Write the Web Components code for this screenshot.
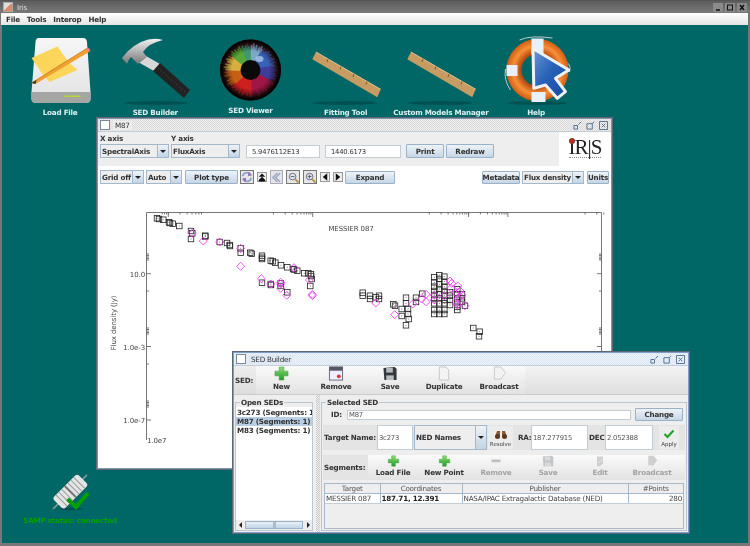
<!DOCTYPE html>
<html>
<head>
<meta charset="utf-8">
<title>Iris</title>
<style>
  html, body { margin: 0; padding: 0; width: 750px; height: 546px; overflow: hidden; background: #006666; }
  body { font: bold 7.2px "DejaVu Sans", sans-serif; letter-spacing: -.22px; color: #333; }
</style>
</head>
<body>
<iris-desktop></iris-desktop>

<script>
const floppy = (c, d) => `<svg viewBox="0 0 16 16" width="16" height="16"><path d="M1 2 L13 1 L15 3 L15 15 L2 15 Z" fill="${c}"/><rect x="4" y="2" width="7" height="5" fill="${d}"/><rect x="4" y="10" width="8" height="5" fill="#ddd" opacity=".8"/></svg>`
const plus = `<svg viewBox="0 0 16 16" width="15" height="15"><defs><linearGradient id="pg" x1="0" y1="0" x2="0" y2="1"><stop offset="0" stop-color="#8be070"/><stop offset="1" stop-color="#1f9a2c"/></linearGradient></defs><path d="M5.5 1 H10.5 V5.5 H15 V10.5 H10.5 V15 H5.5 V10.5 H1 V5.5 H5.5 Z" fill="url(#pg)" stroke="#3a9a3a" stroke-width=".5"/></svg>`
const page = (c) => `<svg viewBox="0 0 16 16" width="16" height="16"><path d="M3 1 H10 L13 4 V15 H3 Z" fill="${c}" stroke="#c4c4c4" stroke-width="1"/></svg>`

const ICONS = {
  plus,
  floppy: floppy("#33383c", "#b8bcc0"),
  floppyOff: floppy("#c2c4c6", "#dcdcdc"),
  card: `<svg viewBox="0 0 16 16" width="16" height="16"><rect x="1" y="1" width="14" height="14" fill="#eef" stroke="#667" stroke-width="1"/><rect x="1" y="1" width="14" height="4" fill="#556"/><circle cx="11" cy="11" r="2" fill="#d33"/></svg>`,
  page: page("#f4f4f4"),
  send: `<svg viewBox="0 0 16 16" width="16" height="16"><path d="M3 1 H10 L15 7 L10 14 H3 Z" fill="#f2f2f2" stroke="#c8c8c8"/></svg>`,
  sendOff: `<svg viewBox="0 0 16 16" width="16" height="16"><path d="M3 1 H10 L15 7 L10 14 H3 Z" fill="#cfcfcf"/></svg>`,
  minusOff: `<svg viewBox="0 0 16 16" width="16" height="16"><rect x="2" y="6" width="12" height="3.5" rx="1" fill="#c0c0c0"/></svg>`,
  editOff: `<svg viewBox="0 0 16 16" width="16" height="16"><path d="M4 2 H12 V11 L8 15 H4 Z" fill="#d0d0d0"/><path d="M6 11 L11 5" stroke="#eee"/></svg>`,
  binoculars: `<svg viewBox="0 0 14 10" width="14" height="10"><path d="M1 8 L3 2 H6 V8 Z M8 2 H11 L13 8 H8 Z" fill="#8a5a30"/><circle cx="3.5" cy="7.5" r="2.5" fill="#5a3a20"/><circle cx="10.5" cy="7.5" r="2.5" fill="#5a3a20"/></svg>`,
  check: `<svg viewBox="0 0 12 10" width="12" height="10"><path d="M1.5 5 L4.5 8 L10.5 1.5" fill="none" stroke="#22a022" stroke-width="2"/></svg>`,
}

const NAV = {
  cycle: `<svg viewBox="0 0 14 14" width="12" height="12"><path d="M2 6 A5 5 0 0 1 11 4 M12 8 A5 5 0 0 1 3 10" fill="none" stroke="#8aa0c8" stroke-width="2"/><path d="M9 1 L13 5 L8 6 Z M5 13 L1 9 L6 8 Z" fill="#8a70b8"/></svg>`,
  top: `<svg viewBox="0 0 10 10" width="9" height="9"><path d="M5 0 L9 4 H1 Z M5 4 L9 8 H1 Z" fill="#111"/><rect x="1" y="8" width="8" height="2" fill="#111"/></svg>`,
  back: `<svg viewBox="0 0 12 12" width="11" height="11"><path d="M7 1 L2 6 L7 11 M10 1 L5 6 L10 11" fill="none" stroke="#9aa8c8" stroke-width="1.6"/></svg>`,
  zoomOut: `<svg viewBox="0 0 12 12" width="11" height="11"><circle cx="5" cy="5" r="3.6" fill="#dde6f2" stroke="#667"/><path d="M3 5 H7" stroke="#555"/><path d="M8 8 L11.5 11.5" stroke="#b89030" stroke-width="2"/></svg>`,
  zoomIn: `<svg viewBox="0 0 12 12" width="11" height="11"><circle cx="5" cy="5" r="3.6" fill="#dde6f2" stroke="#667"/><path d="M3 5 H7 M5 3 V7" stroke="#555"/><path d="M8 8 L11.5 11.5" stroke="#b89030" stroke-width="2"/></svg>`,
  left: `<svg viewBox="0 0 8 10" width="6" height="8"><path d="M7 0 V10 L1 5 Z" fill="#111"/></svg>`,
  right: `<svg viewBox="0 0 8 10" width="6" height="8"><path d="M1 0 V10 L7 5 Z" fill="#111"/></svg>`,
}

// hue by clock angle for the iris rays
const irisColor = (deg) => {
  const stops = [[0,"#7fa8c8"],[30,"#3a62b8"],[80,"#3f3f9a"],[120,"#a01848"],[180,"#d02020"],[230,"#c86018"],[270,"#d8b040"],[305,"#58a838"],[340,"#3f9a70"],[360,"#7fa8c8"]]
  for (let i = stops.length - 1; i >= 0; i--) if (deg >= stops[i][0]) return stops[i][1]
}
const irisRays = () => {
  let s = ""
  for (let i = 0; i < 150; i++) {
    const a = i * 2.4
    const r = a * Math.PI / 180 - Math.PI / 2
    const len = 20 + ((i * 37) % 8)
    const x1 = 251 + 8 * Math.cos(r), y1 = 70 + 8 * Math.sin(r)
    const x2 = 251 + len * Math.cos(r), y2 = 70 + len * Math.sin(r)
    const dark = i % 7 == 0 ? ' opacity=".5"' : ""
    s += `<line x1="${x1.toFixed(1)}" y1="${y1.toFixed(1)}" x2="${x2.toFixed(1)}" y2="${y2.toFixed(1)}" stroke="${irisColor(a)}" stroke-width="1.8"${dark}/>`
  }
  return s
}

const DESK = {
  load: `<svg viewBox="12.5 30 95 76" width="95" height="76">
    <defs><linearGradient id="dr" x1="0" y1="0" x2="0" y2="1"><stop offset="0" stop-color="#f6f6f6"/><stop offset="1" stop-color="#e2e2e2"/></linearGradient></defs>
    <path d="M38 38 H83 Q86 38 86.500 42 L90 92 V99 Q90 103 85 103 H36 Q31 103 31 99 V92 L35 42 Q35.500 38 38 38 Z" fill="url(#dr)"/>
    <path d="M31 92 H90 V99 Q90 103 85 103 H36 Q31 103 31 99 Z" fill="#a4a6a4"/>
    <rect x="64" y="95.500" width="16" height="1.500" fill="#b8d830"/>
    <path d="M31 58 L57 46.500 L68 62 L77 70 L49 82 L42 74 Z" fill="#fbd65a"/>
    <path d="M31 83 L87 48 L90 51 L35 84 Z" fill="#f0a030"/>
    <path d="M31 83 L87 48" stroke="#c87818" stroke-width=".8"/>
    <path d="M85 49 L87.500 47.500 L90 50 L88 52 Z" fill="#e88080"/>
    <path d="M31 83 L36 80 L35 84 Z" fill="#333"/>
  </svg>`,
  hammer: `<svg viewBox="108 30 95 76" width="95" height="76">
    <defs><linearGradient id="hm" x1="0" y1="0" x2="0" y2="1"><stop offset="0" stop-color="#f0f0f0"/><stop offset="1" stop-color="#777"/></linearGradient></defs>
    <ellipse cx="156" cy="103" rx="32" ry="2" fill="#004a4a" opacity=".7"/>
    <path d="M146 56 L160 64 L154 71 L138 62 Z" fill="#d8d8d8"/>
    <path d="M122 58 L128 51 Q146 35 163 40 Q149 43 143 52 L147 57 L138 64 L131 57 Q128 60 127 64 Z" fill="url(#hm)"/>
    <path d="M160 63 L190 90 L184 98 L153 71 Z" fill="#222"/>
    <path d="M158 68 L185 92" stroke="#555" stroke-width="1" stroke-dasharray="1 2.500"/>
  </svg>`,
  eye: `<svg viewBox="203.500 30 95 76" width="95" height="76">
    <defs><radialGradient id="rim" gradientUnits="userSpaceOnUse" cx="251" cy="70" r="31"><stop offset=".6" stop-color="#000" stop-opacity="0"/><stop offset=".82" stop-color="#000" stop-opacity=".4"/><stop offset=".95" stop-color="#000"/></radialGradient></defs>
    <circle cx="251" cy="70" r="30.500" fill="#4a1a20"/>
    ${irisRays()}
    <circle cx="251" cy="70" r="30.500" fill="url(#rim)"/>
    <circle cx="251" cy="70" r="10" fill="#0a0a0a"/>
    <ellipse cx="260" cy="59" rx="4" ry="3" fill="#bcd8f0" opacity=".7"/>
  </svg>`,
  ruler: `<svg viewBox="0 0 95 76" width="95" height="76">
    <ellipse cx="47" cy="73" rx="32" ry="2" fill="#004a4a" opacity=".7"/>
    <path d="M18 22 L82.700 59.300 L79.300 67.300 L14.300 29.300 Z" fill="#c69c62"/>
    <path d="M18 22 L82.700 59.300" stroke="#e0c08c" stroke-width="1"/>
    <path d="M30 29 L29 32 M43 36.500 L42 39.500 M56 44 L55 47 M69 51.500 L68 54.500" stroke="#6a4a20" stroke-width=".8"/>
  </svg>`,
  buoy: `<svg viewBox="488.500 30 95 76" width="95" height="76">
    <defs><radialGradient id="or" gradientUnits="userSpaceOnUse" cx="537" cy="70" r="31"><stop offset=".55" stop-color="#b84c10"/><stop offset=".78" stop-color="#f89038"/><stop offset="1" stop-color="#d05c14"/></radialGradient>
    <linearGradient id="ar" x1="0" y1="0" x2="1" y2="1"><stop offset="0" stop-color="#6d9ad8"/><stop offset=".45" stop-color="#2a62b8"/><stop offset="1" stop-color="#1048a0"/></linearGradient></defs>
    <ellipse cx="537" cy="103" rx="30" ry="2" fill="#004a4a" opacity=".7"/>
    <path d="M519 40 Q530 35 552 38 M505 69 Q503 80 510 90 M560 60 Q572 62 569 72" fill="none" stroke="#c0c8c8" stroke-width="1"/>
    <circle cx="537" cy="70" r="23.500" fill="none" stroke="url(#or)" stroke-width="15"/>
    <path d="M531 38.500 H543 V54 H531 Z M506 65 H517 V76 H506 Z M531 92 H545 V102 H531 Z" fill="#e8f0fa"/>
    <path d="M532.500 48.500 L568.300 70 L555 78.300 L565 91.700 L556.700 98.300 L545 85 L533.300 88.300 Z" fill="url(#ar)" stroke="#eef2f4" stroke-width="3" stroke-linejoin="round"/>
  </svg>`,
  plug: `<svg viewBox="0 0 50 42" width="50" height="42">
    <ellipse cx="25" cy="37" rx="13" ry="1.500" fill="#004a4a" opacity=".7"/>
    <g transform="rotate(45 25 20)">
      <path d="M25 -4 V5 M25 35 V44" stroke="#8a9a9a" stroke-width="1.600"/>
      <rect x="17" y="2" width="16" height="35" rx="3" fill="#e4e4e4"/>
      <path d="M17 7 H33 M17 11 H33 M17 15 H33 M17 24 H33 M17 28 H33 M17 32 H33" stroke="#9a9a9a" stroke-width="1"/>
      <rect x="17" y="18.500" width="16" height="2" fill="#777"/>
    </g>
    <path d="M22.500 27 L31 35 L43 21" fill="none" stroke="#00a000" stroke-width="4"/>
  </svg>`,
}

class JBtn extends HTMLElement {
  constructor() {
    super()
    this.attachShadow({ mode: "open" })
    this.shadowRoot.innerHTML = `
      <style>
        :host { display: inline-flex; align-items: center; justify-content: center; box-sizing: border-box; height: 13px; flex: none;
          background: linear-gradient(#eef3f8, #c6d6e6); border: 1px solid #9ab2c8; border-radius: 1px; color: #333; white-space: nowrap; }
      </style>
      <slot></slot>`
  }
}
customElements.define("j-btn", JBtn)

class JCombo extends HTMLElement {
  constructor() {
    super()
    this.attachShadow({ mode: "open" })
  }
  connectedCallback() {
    this.shadowRoot.innerHTML = `
      <style>
        :host { display: flex; box-sizing: border-box; height: 14px; flex: none; border: 1px solid #a4b8cc; background: #eeeeee; color: #333; }
        span { flex: 1; padding-left: 1px; align-self: center; white-space: nowrap; overflow: hidden; }
        b { width: 10px; flex: none; display: flex; align-items: center; justify-content: center; background: linear-gradient(#eef3f8, #c2d4e6); border-left: 1px solid #a4b8cc; }
        i { border: 3px solid transparent; border-top: 3px solid #222; border-bottom: 0; }
      </style>
      <span>${this.getAttribute("text")}</span><b><i></i></b>`
  }
}
customElements.define("j-combo", JCombo)

class JField extends HTMLElement {
  constructor() {
    super()
    this.attachShadow({ mode: "open" })
    this.shadowRoot.innerHTML = `
      <style>
        :host { display: flex; align-items: center; box-sizing: border-box; flex: none; background: #fff; padding-left: 1px;
          border: 1px solid #c4ccd4; font-weight: normal; font-size: 6.800px; letter-spacing: -.2px; color: #555; white-space: nowrap; overflow: hidden; }
      </style>
      <slot></slot>`
  }
}
customElements.define("j-field", JField)

class ToolBtn extends HTMLElement {
  constructor() {
    super()
    this.attachShadow({ mode: "open" })
  }
  connectedCallback() {
    const off = this.hasAttribute("off")
    this.shadowRoot.innerHTML = `
      <style>
        :host { display: flex; flex-direction: column; align-items: center; justify-content: flex-end; flex: none; box-sizing: border-box; padding-bottom: 3px; gap: 2px;
          color: ${off ? "#a4a4a4" : "#333"}; white-space: nowrap; }
        svg { display: block; }
        span { line-height: 8px; }
      </style>
      ${ICONS[this.getAttribute("icon")]}<span>${this.getAttribute("label")}</span>`
  }
}
customElements.define("tool-btn", ToolBtn)

class DeskIcon extends HTMLElement {
  constructor() {
    super()
    this.attachShadow({ mode: "open" })
  }
  connectedCallback() {
    this.shadowRoot.innerHTML = `
      <style>
        :host { display: flex; flex-direction: column; align-items: center; flex: none; width: 95.200px; color: #dff0f0; white-space: nowrap; }
        svg { display: block; }
        span { margin-top: var(--label-gap, 2px); height: 10px; line-height: 10px; }
      </style>
      ${DESK[this.getAttribute("icon")]}<span>${this.getAttribute("label")}</span>`
  }
}
customElements.define("desk-icon", DeskIcon)

class IntFrame extends HTMLElement {
  constructor() {
    super()
    this.attachShadow({ mode: "open" })
  }
  connectedCallback() {
    const on = this.hasAttribute("active")
    const c = on ? "#7f9ccc" : "#8494a8"
    const dot = on ? "#dbe6f4" : "#d8d8d8"
    const glyph = (d) => `<svg viewBox="0 0 10 10" width="9" height="9"><path d="${d}" fill="none" stroke="#4a6a8a" stroke-width="1"/></svg>`
    this.shadowRoot.innerHTML = `
      <style>
        :host { position: absolute; display: flex; flex-direction: column; box-sizing: border-box; background: #eeeeee; border: 2px solid ${c}; outline: 1px solid #5c6878; outline-offset: -1px; }
        .title { display: flex; align-items: center; gap: 3px; height: 13px; flex: none; box-sizing: border-box; padding: 0 3px 0 2px;
          font-weight: normal; color: #333; border-bottom: 1px solid #c4ccd4;
          background-color: ${on ? "#c8d8ec" : "#eeeeee"}; background-image: repeating-conic-gradient(${dot} 0 25%, ${on ? "#eef3fa" : "#f0f0f0"} 0 50%); background-size: 2px 2px; }
        .title span { background: ${on ? "#e0e8f4" : "#ececec"}; padding: 0 2px; }
        .box { width: 8px; height: 8px; background: #fff; border: 1px solid #7a8a9c; flex: none; }
        .ctl { margin-left: auto; display: flex; gap: 4px; }
        svg { display: block; }
      </style>
      <div class="title">
        <div class="box"></div><span>${this.getAttribute("title-text")}</span>
        <div class="ctl">
          ${glyph("M1 5 H5 V9 H1 Z M6 4 L9 1")}${glyph("M1 3 H7 V9 H1 Z M7 3 L9 1")}${glyph("M0.500 0.500 H9.500 V9.500 H0.500 Z M3 3 L7 7 M7 3 L3 7")}
        </div>
      </div>
      <slot></slot>`
  }
}
customElements.define("int-frame", IntFrame)

class PlotChart extends HTMLElement {
  constructor() {
    super()
    this.attachShadow({ mode: "open" })
  }
  _ticks() {
    let d = ""
    // top axis, decades are 39.3px wide but the plot only drew some of them
    const decade = (x0, from, to) => {
      for (let m = from; m <= to; m++) {
        const x = x0 + 39.3 * Math.log10(m)
        d += `M${x.toFixed(1)} 212.500 V${m == 10 ? 217 : 214.500}`
      }
    }
    decade(129, 7, 10); decade(168.300, 1, 7); decade(273.400, 1, 10); decade(429.300, 1, 10); decade(468.600, 1, 10); decade(585, 1, 3)
    // y axis clusters, left and right
    const ys = [254, 255.500, 257, 258.500, 260, 273.700, 291, 328, 329.500, 331, 332.500, 334, 346.500, 364, 401, 402.500, 404, 405.500, 407, 420]
    for (const y of ys) {
      const big = y == 273.700 || y == 346.500 || y == 420
      d += `M146.500 ${y} H${big ? 151 : 149}M601.500 ${y} H${big ? 597 : 599}`
    }
    return d
  }
  connectedCallback() {
    // picked off the reference plot, in page pixels
    const black = [[157,218.300],[159,219],[163.300,219.700],[169,222.300],[170,223],[172.700,223.700],[179.300,226],[191,231],[191,239],[192.300,233.300],[205.300,235.700],[205.300,236.500],[219.700,242],[227,243],[229.700,245],[230,246],[240.700,248.300],[240.700,252.700],[250.300,252.700],[251.700,253.700],[262,255.700],[262,257.700],[262,259],[270.700,260.700],[272.700,261.300],[275.300,262.700],[281,265.300],[287.300,267.300],[293.300,269],[294,269.500],[297.300,270.700],[304.300,273.300],[308.300,273.300],[311,274.300],[311,276],[311.700,279],[310.300,286],[262,282.700],[270.700,284],[271,285],[280.700,286],[280.700,283.300],[287.300,292.300],
      [362.700,292.700],[362.700,295.700],[370,295.700],[370,299],[375.700,297.300],[379,295.700],[379,299],[393.300,304.300],[395,305.700],[401.700,309],[401.700,316],[406,297.700],[406,303.300],[408,309],[408,314],[408.700,319],[406,325.300],[416,297.700],[416,302],[422.300,293.700],[473.300,328],[479.700,331.700],[479,336.300],[465,305.700]]
    const cols = [[253,[217,232,245,258,270,282,295,315,327]],[268,[211,222,238,252,268,280,295,315,327]],[283,[215,230,245,258,272,285,295,315,327]],[300,[262,272,285,300]],[322,[253,268,280,292,305,315]],[336,[268,280,290]]]
    for (const [x, list] of cols) for (const y of list) black.push([350 + x / 3, 205 + y / 3])
    const pink = [[192.300,233.300],[203.300,241],[219.700,242],[240.700,248.300],[240.700,266.300],[261.300,278.700],[270.700,284],[280.700,282.300],[280.700,284],[280.700,288.300],[286.700,295.300],[294,267.700],[309.300,280],[312.300,294.300],[312.300,295.700],
      [375.700,303],[394.700,314.700],[412.700,304],[421.700,299],[426,294.300],[426,301.700],[434.300,295],[434.300,300],[444.300,295.700],[450,281],[451.700,283.300],[451,288.300],[457.700,286],[460,291],[456,293.300],[458.300,298.300],[456,302.300],[457.300,305],[465,305.700],[461.700,295]]
    const squares = black.map(([x, y]) => `<rect x="${x - 2.750}" y="${y - 2.750}" width="5.500" height="5.500"/><rect class="dot" x="${x - .5}" y="${y - .5}" width="1" height="1"/>`).join("")
    const diamonds = pink.map(([x, y]) => `<path d="M${x} ${y - 4} L${x + 4} ${y} L${x} ${y + 4} L${x - 4} ${y} Z"/>`).join("")
    this.shadowRoot.innerHTML = `
      <style>
        :host { display: block; flex: none; }
        svg { display: block; font: normal 7px "DejaVu Sans", sans-serif; letter-spacing: -.1px; }
        text { fill: #444; }
        .sq rect { fill: none; stroke: #222; stroke-width: .8; }
        .sq .dot { fill: #777; stroke: none; }
        .di path { fill: none; stroke: #f040f0; stroke-width: .9; }
      </style>
      <svg viewBox="98 184 513 284" width="513" height="284">
        <rect x="98" y="184" width="513" height="284" fill="#fff"/>
        <path d="M146.500 440 V212.500 H601.500 V440" fill="none" stroke="#777" stroke-width="1"/>
        <path d="${this._ticks()}" fill="none" stroke="#555" stroke-width=".8"/>
        <g class="sq">${squares}</g>
        <g class="di">${diamonds}</g>
        <text x="351" y="230.500" text-anchor="middle">MESSIER 087</text>
        <text x="145" y="276.500" text-anchor="end">10.0</text>
        <text x="145" y="349.500" text-anchor="end">1.0e-3</text>
        <text x="145" y="422.500" text-anchor="end">1.0e-7</text>
        <text x="147" y="443">1.0e7</text>
        <text transform="translate(116 323) rotate(-90)" text-anchor="middle">Flux density (Jy)</text>
      </svg>`
  }
}
customElements.define("plot-chart", PlotChart)

class IrisLogo extends HTMLElement {
  constructor() {
    super()
    this.attachShadow({ mode: "open" })
    this.shadowRoot.innerHTML = `
      <style>
        :host { display: flex; flex-direction: column; align-items: center; justify-content: center; width: 52px; flex: none; background: #fff; }
        div { font: normal 21px/17px "Liberation Serif", serif; color: #222; letter-spacing: -1px; position: relative; }
        i { position: absolute; left: 0; top: -1px; width: 6px; height: 6px; border-radius: 50%; background: radial-gradient(#c22 30%, #2a5a3a); }
        u { display: block; width: 32px; height: 1px; margin-top: 1px; border-top: 1px dotted #888; }
      </style>
      <div><i></i>IR|S</div><u></u>`
  }
}
customElements.define("iris-logo", IrisLogo)

class PlotWindow extends HTMLElement {
  constructor() {
    super()
    this.attachShadow({ mode: "open" })
  }
  connectedCallback() {
    this.shadowRoot.innerHTML = `
      <style>
        :host { display: flex; flex-direction: column; flex: 1; background: #fff; min-height: 0; }
        .top { display: flex; height: 34px; flex: none; }
        .axes { flex: 1; display: flex; align-items: flex-end; background: #eeeeee; padding: 0 0 8px 2px; }
        .axis { display: flex; flex-direction: column; }
        .axis span { height: 10px; line-height: 10px; }
        .row { display: flex; align-items: center; height: 14px; margin-top: 4px; flex: none; padding-left: 2px; }
        .row .nav { display: flex; align-items: center; justify-content: center; box-sizing: border-box; flex: none; background: #e6e6e6; border: 1px solid #777; height: 14px; }
        .nav svg { display: block; }
        .small { height: 10px !important; border-color: #999 !important; background: #eee !important; }
        .right { margin-left: auto; display: flex; align-items: center; padding-right: 2px; }
      </style>
      <div class="top">
        <div class="axes">
          <div class="axis"><span>X axis</span><j-combo text="SpectralAxis" style="width:69px"></j-combo></div>
          <div class="axis" style="margin-left:2px"><span>Y axis</span><j-combo text="FluxAxis" style="width:69px"></j-combo></div>
          <j-field style="width:74px;height:13px;margin-left:6px;color:#333;padding-left:5px">5.9476112E13</j-field>
          <j-field style="width:76px;height:13px;margin-left:5px;color:#333;padding-left:5px">1440.6173</j-field>
          <j-btn style="width:38px;margin-left:5px;height:14px">Print</j-btn>
          <j-btn style="width:48px;margin-left:2px;height:14px">Redraw</j-btn>
        </div>
        <iris-logo></iris-logo>
      </div>
      <div class="row">
        <j-combo text="Grid off" style="width:44px"></j-combo>
        <j-combo text="Auto" style="width:36px;margin-left:2px"></j-combo>
        <j-btn style="width:53px;margin-left:3px;height:14px">Plot type</j-btn>
        <div class="nav" style="width:14px;margin-left:2px">${NAV.cycle}</div>
        <div class="nav small" style="width:10px;margin-left:3px">${NAV.top}</div>
        <div class="nav" style="width:13px;margin-left:3px;border-color:#aab">${NAV.back}</div>
        <div class="nav" style="width:14px;margin-left:3px">${NAV.zoomOut}</div>
        <div class="nav" style="width:14px;margin-left:3px">${NAV.zoomIn}</div>
        <div class="nav small" style="width:10px;margin-left:3px">${NAV.left}</div>
        <div class="nav small" style="width:10px;margin-left:3px">${NAV.right}</div>
        <j-btn style="width:50px;margin-left:2px">Expand</j-btn>
        <div class="right">
          <j-btn style="width:38px">Metadata</j-btn>
          <j-combo text="Flux density" style="width:62px;margin-left:2px;height:13px"></j-combo>
          <j-btn style="width:22px;margin-left:3px">Units</j-btn>
        </div>
      </div>
      <plot-chart></plot-chart>`
  }
}
customElements.define("plot-window", PlotWindow)

class TitledBox extends HTMLElement {
  constructor() {
    super()
    this.attachShadow({ mode: "open" })
  }
  connectedCallback() {
    this.shadowRoot.innerHTML = `
      <style>
        :host { display: flex; flex-direction: column; box-sizing: border-box; position: relative; border: 1px solid #bcc6d0; min-width: 0; }
        b { position: absolute; left: 4px; top: -5px; line-height: 9px; padding: 0 1px; background: #eeeeee; }
      </style>
      <b>${this.getAttribute("label")}</b><slot></slot>`
  }
}
customElements.define("titled-box", TitledBox)

class SedTable extends HTMLElement {
  constructor() {
    super()
    this.attachShadow({ mode: "open" })
    this.shadowRoot.innerHTML = `
      <style>
        :host { display: block; box-sizing: border-box; flex: 1; border: 1px solid #a8b8c8; margin: 0 1px; font-weight: normal; }
        table { border-collapse: collapse; width: 100%; table-layout: fixed; }
        th { font-weight: normal; color: #555; height: 9px; padding: 0; border-right: 1px solid #a8b8c8; border-bottom: 1px solid #a8b8c8; }
        td { background: #fff; color: #444; height: 9px; padding: 0 0 0 1px; border-right: 1px solid #a8b8c8; border-bottom: 1px solid #c4ccd4; white-space: nowrap; overflow: hidden; }
        td.b { font-weight: bold; color: #222; }
        td.n { text-align: right; padding-right: 1px; }
        th:last-child, td:last-child { border-right: 0; }
      </style>
      <table>
        <colgroup><col style="width:55px"><col style="width:82px"><col style="width:166px"><col></colgroup>
        <tr><th>Target</th><th>Coordinates</th><th>Publisher</th><th>#Points</th></tr>
        <tr><td>MESSIER 087</td><td class="b">187.71, 12.391</td><td>NASA/IPAC Extragalactic Database (NED)</td><td class="n">280</td></tr>
      </table>`
  }
}
customElements.define("sed-table", SedTable)

class SedBuilder extends HTMLElement {
  constructor() {
    super()
    this.attachShadow({ mode: "open" })
  }
  connectedCallback() {
    this.shadowRoot.innerHTML = `
      <style>
        :host { display: flex; flex-direction: column; flex: 1; min-height: 0; }
        .bar { display: flex; height: 28px; flex: none; background: linear-gradient(#eeeeee, #dcdcdc); }
        .bar > span { width: 21px; flex: none; align-self: center; padding-left: 1px; }
        .tools { display: flex; background: linear-gradient(#fafafa, #e2e2e2); }
        .bar .fill { flex: 1; background: linear-gradient(#f4f4f4, #dedede); }
        .main { flex: 1; display: flex; min-height: 0; padding: 7px 1px 1px 1px; box-sizing: border-box; border-top: 1px solid #ccc; }
        .left { width: 78px; flex: none; }
        .grip { width: 4px; margin: -7px 1px -1px 3px; flex: none; background: repeating-conic-gradient(#c8c8c8 0 25%, #f0f0f0 0 50%); background-size: 2px 2px; }
        .list { flex: 1; margin-top: 4px; background: #fff; padding-top: 1px; display: flex; flex-direction: column; overflow: hidden; white-space: nowrap; }
        .list div { height: 9px; line-height: 9px; padding-left: 1px; }
        .list .sel { background: #b8cfe5; }
        .scroll { height: 10px; flex: none; display: flex; align-items: center; gap: 1px; background: #eee; }
        .scroll i { width: 8px; height: 8px; background: #eee; flex: none; display: flex; align-items: center; justify-content: center; }
        .scroll i::after { content: ""; border: 3px solid transparent; }
        .scroll i.l::after { border-right-color: #222; border-left: 0; }
        .scroll i.r::after { border-left-color: #222; border-right: 0; }
        .scroll u { flex: 1; height: 8px; background: linear-gradient(#e8f0f8, #c0d4e8); border: 1px solid #9ab2c8; box-sizing: border-box; display: flex; justify-content: center; text-decoration: none; }
        .scroll u::after { content: ""; width: 3px; background: #aabbd0; }
        .right { flex: 1; padding: 5px 1px 0 1px; gap: 0; }
        .id { display: flex; align-items: center; height: 13px; flex: none; }
        .id span { margin-left: 8px; width: 16px; }
        .target { display: flex; align-items: center; height: 25px; margin-top: 4px; flex: none; background: #e4e4e4; white-space: nowrap; }
        .target > span { flex: none; }
        .small { display: flex; flex-direction: column; align-items: center; justify-content: flex-end; gap: 2px; height: 23px; flex: none; font-size: 5.500px; letter-spacing: 0; font-weight: normal; color: #444; background: #ececec; padding-bottom: 2px; box-sizing: border-box; }
        .small svg { display: block; }
        .segs { display: flex; height: 25px; margin-top: 5px; flex: none; }
        .segs > span { width: 45px; flex: none; align-self: stretch; display: flex; align-items: center; background: #e4e4e4; padding-left: 1px; box-sizing: border-box; }
        .segs .tools { flex: 1; }
        .main sed-table { margin-top: 3px; margin-bottom: 1px; }
      </style>
      <div class="bar">
        <span>SED:</span>
        <div class="tools">
          <tool-btn icon="plus" label="New" style="width:51px"></tool-btn>
          <tool-btn icon="card" label="Remove" style="width:58px"></tool-btn>
          <tool-btn icon="floppy" label="Save" style="width:50px"></tool-btn>
          <tool-btn icon="page" label="Duplicate" style="width:58px"></tool-btn>
          <tool-btn icon="send" label="Broadcast" style="width:52px"></tool-btn>
        </div>
        <div class="fill"></div>
      </div>
      <div class="main">
        <titled-box class="left" label="Open SEDs">
          <div class="list">
            <div>3c273 (Segments: 1)</div>
            <div class="sel">M87 (Segments: 1)</div>
            <div>M83 (Segments: 1)</div>
          </div>
          <div class="scroll"><i class="l"></i><u></u><i class="r"></i></div>
        </titled-box>
        <div class="grip"></div>
        <titled-box class="right" label="Selected SED">
          <div class="id">
            <span>ID:</span>
            <j-field style="width:284px;height:10px">M87</j-field>
            <j-btn style="width:48px;margin-left:4px">Change</j-btn>
          </div>
          <div class="target">
            <span style="width:54px;padding-left:1px;box-sizing:border-box">Target Name:</span>
            <j-field style="width:36px;height:25px">3c273</j-field>
            <j-combo text="NED Names" style="width:73px;height:25px;margin-left:1px"></j-combo>
            <div class="small" style="width:25px;margin-left:1px">${ICONS.binoculars}<span>Resolve</span></div>
            <span style="margin-left:5px;width:13px">RA:</span>
            <j-field style="width:57px;height:25px">187.277915</j-field>
            <span style="margin-left:1px;width:16px">DEC:</span>
            <j-field style="width:48px;height:25px">2.052388</j-field>
            <div class="small" style="width:20px;margin-left:6px">${ICONS.check}<span>Apply</span></div>
          </div>
          <div class="segs">
            <span>Segments:</span>
            <div class="tools">
              <tool-btn icon="plus" label="Load File" style="width:50px"></tool-btn>
              <tool-btn icon="plus" label="New Point" style="width:52px"></tool-btn>
              <tool-btn icon="minusOff" label="Remove" off style="width:52px"></tool-btn>
              <tool-btn icon="floppyOff" label="Save" off style="width:52px"></tool-btn>
              <tool-btn icon="editOff" label="Edit" off style="width:52px"></tool-btn>
              <tool-btn icon="sendOff" label="Broadcast" off style="width:52px"></tool-btn>
            </div>
          </div>
          <sed-table></sed-table>
        </titled-box>
      </div>`
  }
}
customElements.define("sed-builder", SedBuilder)

class SampStatus extends HTMLElement {
  constructor() {
    super()
    this.attachShadow({ mode: "open" })
    this.shadowRoot.innerHTML = `
      <style>
        :host { position: absolute; left: 0; top: 447px; width: 136px; display: flex; flex-direction: column; align-items: center; color: #00a000; white-space: nowrap; }
        svg { display: block; }
        span { margin-top: 2px; line-height: 10px; }
      </style>
      ${DESK.plug}<span>SAMP status: connected</span>`
  }
}
customElements.define("samp-status", SampStatus)

class IrisDesktop extends HTMLElement {
  constructor() {
    super()
    this.attachShadow({ mode: "open" })
    this.shadowRoot.innerHTML = `
      <style>
        :host { display: flex; flex-direction: column; width: 750px; height: 546px; box-sizing: border-box; background: #777; border-top: 1px solid #555; filter: blur(.35px); }
        .title { display: flex; align-items: center; height: 12px; flex: none; padding: 0 3px 0 3px; gap: 4px; color: #ddd; font-weight: normal; background: linear-gradient(#5c5c5c, #7a7a7a); }
        .title .ico { width: 8px; height: 8px; background: linear-gradient(135deg, #ddd 50%, #d86 50%); border: 1px solid #aaa; }
        .ctl { margin-left: auto; display: flex; gap: 2px; }
        .ctl svg { display: block; width: 10px; height: 9px; background: #8a8a8a; }
        .menu { display: flex; gap: 7px; align-items: center; height: 12px; flex: none; padding: 0 5px; color: #333; background: linear-gradient(#ffffff, #e4e4e4); margin: 0 2px 0 1px; }
        .desk { position: relative; flex: 1; margin: 0 2px 3px 2px; background: #006666; }
        .icons { display: flex; padding-left: 10.500px; margin-top: 5px; }
        .icons desk-icon:nth-child(3) { --label-gap: 0px; }
      </style>
      <div class="title">
        <div class="ico"></div><span>Iris</span>
        <div class="ctl">
          <svg viewBox="0 0 10 9"><path d="M3 7 H7" stroke="#111" stroke-width="1.500"/></svg>
          <svg viewBox="0 0 10 9"><rect x="2.500" y="2" width="5" height="5" fill="none" stroke="#111"/></svg>
          <svg viewBox="0 0 10 9"><path d="M3 2 L7 7 M7 2 L3 7" stroke="#111" stroke-width="1.500"/></svg>
        </div>
      </div>
      <div class="menu"><span>File</span><span>Tools</span><span>Interop</span><span>Help</span></div>
      <div class="desk">
        <div class="icons">
          <desk-icon icon="load" label="Load File"></desk-icon>
          <desk-icon icon="hammer" label="SED Builder"></desk-icon>
          <desk-icon icon="eye" label="SED Viewer"></desk-icon>
          <desk-icon icon="ruler" label="Fitting Tool"></desk-icon>
          <desk-icon icon="ruler" label="Custom Models Manager"></desk-icon>
          <desk-icon icon="buoy" label="Help"></desk-icon>
        </div>
        <samp-status></samp-status>
        <int-frame title-text="M87" style="left:94px;top:92px;width:517px;height:353px"><plot-window></plot-window></int-frame>
        <int-frame title-text="SED Builder" active style="left:230px;top:326px;width:458px;height:183px"><sed-builder></sed-builder></int-frame>
      </div>`
  }
}
customElements.define("iris-desktop", IrisDesktop)
</script>
</body>
</html>
